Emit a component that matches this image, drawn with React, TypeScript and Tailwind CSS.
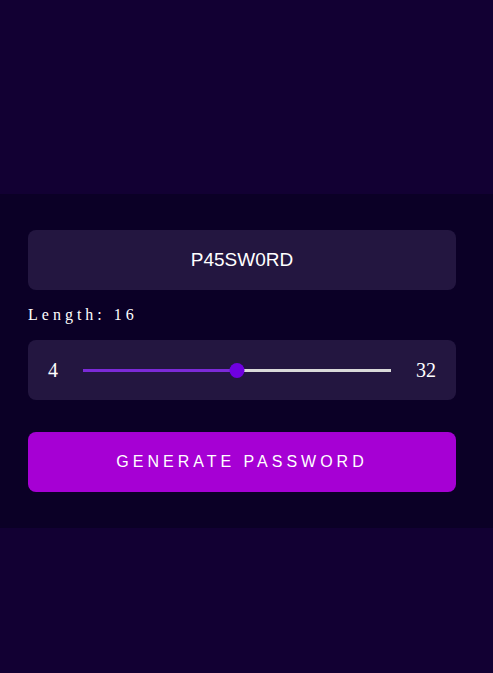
import { useState } from 'react';

const App = () => {
    const [length] = useState(16);
    const [password] = useState('P45SW0RD');

    return (
        <div className="min-h-[673px] bg-[#120033] pt-[194px]">
            <div className="bg-[#0b0026] pl-[28px] py-[36px]">
                <div className="w-[428px]">
                    {/* 生成されたパスワード */}
                    <div className="h-[60px] rounded-lg bg-[#231640] flex items-center justify-center text-white text-[19px] font-['Liberation_Sans',Arial,sans-serif]">
                        {password}
                    </div>

                    <div className="mt-[17px] text-white text-base tracking-[4px] leading-none font-['Liberation_Serif','Times_New_Roman',serif]">
                        Length: {length}
                    </div>

                    {/* スライダー */}
                    <div className="mt-[17px] h-[60px] rounded-lg bg-[#231640] flex items-center px-5 gap-[25px] text-white text-xl font-['Liberation_Serif','Times_New_Roman',serif]">
                        <span>4</span>
                        <div className="relative flex-1 h-[14px] flex items-center">
                            <div className="h-[3px] w-1/2 bg-[#7b2ad8]" />
                            <div className="h-[3px] w-1/2 bg-[#d9d9d9]" />
                            <div className="absolute left-1/2 -translate-x-1/2 w-[15px] h-[15px] rounded-full bg-[#6f00e0]" />
                        </div>
                        <span>32</span>
                    </div>

                    <button className="mt-[32px] w-full h-[60px] rounded-lg bg-[#a600d4] text-white text-base tracking-[4px] font-['Liberation_Sans',Arial,sans-serif]">
                        GENERATE PASSWORD
                    </button>
                </div>
            </div>
        </div>
    );
};

export default App;
